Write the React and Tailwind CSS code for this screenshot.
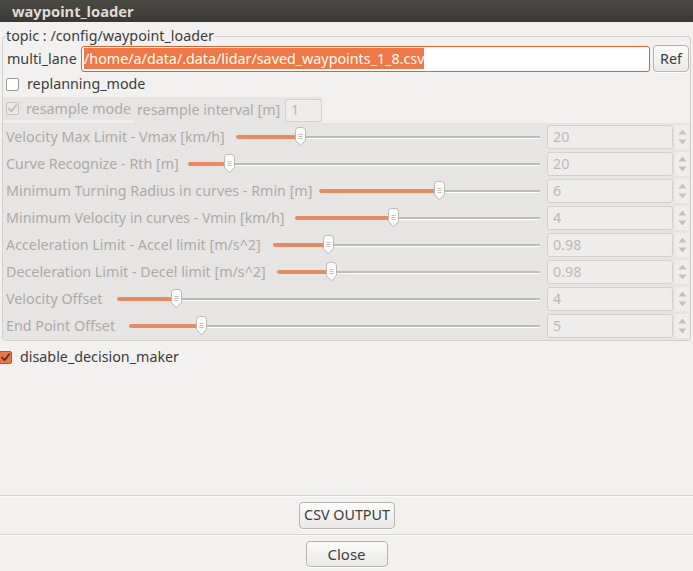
const sliders = [
  { label: "Velocity Max Limit - Vmax [km/h]", lw: "w-[221px]", at: 64, value: "20" },
  { label: "Curve Recognize - Rth [m]", lw: "w-[173px]", at: 41, value: "20" },
  { label: "Minimum Turning Radius in curves - Rmin [m]", lw: "w-[304px]", at: 120, value: "6" },
  { label: "Minimum Velocity in curves - Vmin [km/h]", lw: "w-[280px]", at: 98, value: "4" },
  { label: "Acceleration Limit - Accel limit [m/s^2]", lw: "w-[258px]", at: 55, value: "0.98" },
  { label: "Deceleration Limit - Decel limit [m/s^2]", lw: "w-[262px]", at: 54, value: "0.98" },
  { label: "Velocity Offset", lw: "w-[102px]", at: 59, value: "4" },
  { label: "End Point Offset", lw: "w-[114px]", at: 72, value: "5" },
];

const Check = ({ color }) => (
  <svg width="11" height="11" viewBox="0 0 11 11">
    <path d="M2 5.5 L4.5 8.2 L9.2 2.2" fill="none" stroke={color} strokeWidth="1.8" strokeLinecap="round" strokeLinejoin="round" />
  </svg>
);

const Handle = () => (
  <svg width="13" height="20" viewBox="0 0 13 20">
    <path d="M1.5 3.5 Q1.5 0.5 4.5 0.5 H8.5 Q11.5 0.5 11.5 3.5 V13.5 L6.5 18.8 L1.5 13.5 Z" fill="#fbfbfa" stroke="#bcb8b4" />
    <path d="M4.5 7.5 H8.5 M4.5 9.5 H8.5 M4.5 11.5 H8.5" stroke="#b4b0ac" strokeWidth="0.8" />
  </svg>
);

const Slider = ({ at }) => (
  <div className="relative flex-1 h-[20px] min-w-0">
    <div className="absolute left-0 right-0 top-[9px] h-[2px] rounded-full bg-[#bdb9b5] shadow-[0_1px_0_#ffffff]" />
    <div className="absolute left-0 top-[8px] h-[4px] rounded-full bg-[#ea8a62]" style={{ width: at }} />
    <div className="absolute top-0" style={{ left: at - 6 }}>
      <Handle />
    </div>
  </div>
);

const SpinArrows = () => (
  <div className="ml-[2px] w-[14px] h-[24px] flex flex-col items-center justify-center gap-[4px] bg-[#efeeec]">
    <svg width="9" height="6" viewBox="0 0 9 6">
      <path d="M0.5 5.5 L4.5 0.5 L8.5 5.5 Z" fill="#c4c0bc" />
    </svg>
    <svg width="9" height="6" viewBox="0 0 9 6">
      <path d="M0.5 0.5 L4.5 5.5 L8.5 0.5 Z" fill="#c4c0bc" />
    </svg>
  </div>
);

const Button = ({ children, className }) => (
  <div
    className={
      "flex items-center justify-center rounded-[4px] border border-[#b7b3af] bg-linear-to-b from-[#fbfbfa] to-[#ebe9e7] text-[#3c3c3c] shadow-[0_1px_0_#ffffff] " +
      className
    }
  >
    {children}
  </div>
);

export default function App() {
  return (
    <div className="w-[693px] h-[571px] bg-[#f2f1f0] flex flex-col overflow-hidden font-['Noto_Sans',sans-serif] text-[14.3px] text-[#3c3c3c]">
      <div className="h-[22px] shrink-0 bg-linear-to-b from-[#4a4944] to-[#3a3935] pl-[12px] flex items-center font-bold text-[14.7px] text-[#dfdbd2]">
        waypoint_loader
      </div>

      <fieldset className="mt-[6px] ml-[2px] mr-[2px] border border-[#d2cfcb] rounded-[4px]">
        <legend className="ml-[3px] leading-[16px] whitespace-nowrap">topic : /config/waypoint_loader</legend>

        <div className="mt-px h-[27px] flex items-center pl-[4px] pr-px">
          <span className="w-[74px] whitespace-nowrap">multi_lane</span>
          <div className="flex-1 h-[26px] flex items-center rounded-[3px] border border-[#e0602e] bg-white px-[2px]">
            <span className="bg-[#f07746] text-white leading-[21px] whitespace-nowrap">/home/a/data/.data/lidar/saved_waypoints_1_8.csv</span>
          </div>
          <Button className="ml-[3px] w-[36px] h-[27px]">Ref</Button>
        </div>

        <div className="mt-px h-[22px] flex items-center pl-[3px]">
          <div className="w-[13px] h-[13px] rounded-[2px] border border-[#9f9b97] bg-white" />
          <span className="ml-[8px] whitespace-nowrap">replanning_mode</span>
        </div>

        <div className="mt-[2px] flex items-start text-[#aeaaa6]">
          <div className="w-[130px] h-[23px] bg-[#e7e5e3] flex items-center pl-[3px]">
            <div className="w-[13px] h-[13px] rounded-[2px] border border-[#c7c3bf] bg-[#ebe9e7] flex items-center justify-center">
              <Check color="#bdb9b5" />
            </div>
            <span className="ml-[7px] whitespace-nowrap">resample mode</span>
          </div>
          <div className="w-[189px] h-[26px] bg-[#e7e5e3] flex items-center pl-[4px]">
            <span className="w-[148px] whitespace-nowrap">resample interval [m]</span>
            <div className="w-[37px] h-[23px] rounded-[3px] border border-[#d4d0cc] bg-[#efedeb] flex items-center pl-[5px] text-[#bcb8b4]">
              1
            </div>
          </div>
        </div>

        <div className="bg-[#e7e5e3] rounded-b-[3px] pb-px text-[#aeaaa6]">
          {sliders.map((s) => (
            <div key={s.label} className="h-[27px] flex items-center pl-[3px] pr-px">
              <span className={s.lw + " shrink-0 whitespace-nowrap"}>{s.label}</span>
              <div className="ml-[9px] mr-[7px] flex-1 flex">
                <Slider at={s.at} />
              </div>
              <div className="w-[126px] h-[24px] rounded-[3px] border border-[#d4d0cc] bg-[#efedeb] flex items-center pl-[5px] text-[#bcb8b4]">
                {s.value}
              </div>
              <SpinArrows />
            </div>
          ))}
        </div>
      </fieldset>

      <div className="mt-[6px] h-[20px] flex items-center">
        <div className="-ml-px w-[13px] h-[13px] rounded-[2px] border border-[#c4511f] bg-[#ee7443] flex items-center justify-center">
          <Check color="#4a3126" />
        </div>
        <span className="ml-[8px] whitespace-nowrap">disable_decision_maker</span>
      </div>

      <div className="flex-1" />

      <div className="h-px bg-[#d6d3cf] shadow-[0_1px_0_#fbfbfa]" />
      <div className="h-[38px] flex items-center justify-center">
        <Button className="w-[96px] h-[27px] pl-px">CSV OUTPUT</Button>
      </div>
      <div className="h-px bg-[#d6d3cf] shadow-[0_1px_0_#fbfbfa]" />
      <div className="h-[36px] flex items-start justify-center pt-[6px]">
        <Button className="w-[82px] h-[26px] text-[15px]">Close</Button>
      </div>
    </div>
  );
}
